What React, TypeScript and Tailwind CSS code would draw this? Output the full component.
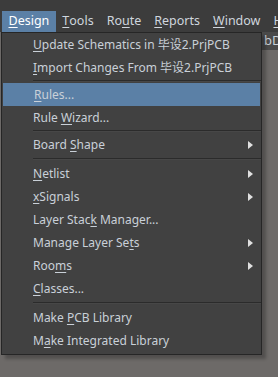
import React from 'react';

type Item = { pre: string; key: string; post: string; sub?: boolean; active?: boolean } | 'sep' | 'sep5';

const items: Item[] = [
  { pre: '', key: 'U', post: 'pdate Schematics in 毕设2.PrjPCB' },
  { pre: '', key: 'I', post: 'mport Changes From 毕设2.PrjPCB' },
  'sep',
  { pre: '', key: 'R', post: 'ules...', active: true },
  { pre: 'Rule ', key: 'W', post: 'izard...' },
  'sep',
  { pre: 'Board ', key: 'S', post: 'hape', sub: true },
  'sep5',
  { pre: '', key: 'N', post: 'etlist', sub: true },
  { pre: '', key: 'x', post: 'Signals', sub: true },
  { pre: 'Layer Stac', key: 'k', post: ' Manager...' },
  { pre: 'Manage Layer Se', key: 't', post: 's', sub: true },
  { pre: 'Roo', key: 'm', post: 's', sub: true },
  { pre: '', key: 'C', post: 'lasses...' },
  'sep5',
  { pre: 'Make ', key: 'P', post: 'CB Library' },
  { pre: 'M', key: 'a', post: 'ke Integrated Library' },
];

const top = [
  ['', 'D', 'esign'],
  ['', 'T', 'ools'],
  ['Ro', 'u', 'te'],
  ['', 'R', 'eports'],
  ['', 'W', 'indow'],
  ['', 'H', 'elp'],
];

export default function App() {
  return (
    <div
      className="relative w-[278px] h-[377px] overflow-hidden bg-[#6d6a68] text-[12px] text-[#c9d0d8]"
      style={{ fontFamily: '"Noto Sans", "Noto Sans CJK SC", sans-serif' }}
    >
      <div className="h-[11px] bg-[#3c3c3c]" />
      <div className="flex h-[21px] items-center bg-[#3c3c3c] pl-[2px] text-[12.5px] text-[#cfd6de]">
        {top.map(([a, k, b], i) => (
          <div
            key={i}
            className={`flex h-full items-center whitespace-nowrap px-[6.5px] ${i === 0 ? 'bg-[#5b80a6] text-white' : ''}`}
          >
            {a}
            <span className="underline underline-offset-2">{k}</span>
            {b}
          </div>
        ))}
      </div>
      <div className="flex">
        <div className="w-[1px] shrink-0" />
        <div className="relative z-10 w-[261px] shrink-0 border border-[#262626] bg-[#414141] pb-[2px] shadow-[4px_4px_3px_rgba(0,0,0,0.25)]">
          {items.map((it, i) =>
            it === 'sep' || it === 'sep5' ? (
              <div key={i} className={`flex items-center pl-[31px] ${it === 'sep5' ? 'h-[6px]' : 'h-[4px]'}`}>
                <div className="h-[2px] w-full border-t border-[#2b2b2b] border-b border-b-[#474747]" />
              </div>
            ) : (
              <div
                key={i}
                className={`flex h-[23px] items-center pl-[31px] pr-[8px] ${it.active ? 'mx-[1px] bg-[#5b80a6] pl-[30px]' : ''}`}
              >
                <span className="flex-1 whitespace-nowrap">
                  {it.pre}
                  <span className="underline underline-offset-2">{it.key}</span>
                  {it.post}
                </span>
                {it.sub && (
                  <svg width="5" height="8" viewBox="0 0 5 8">
                    <path d="M0 0 L5 4 L0 8 Z" fill="#e0e0e0" />
                  </svg>
                )}
              </div>
            )
          )}
        </div>
        <div className="flex h-[18px] flex-1 items-center overflow-hidden whitespace-nowrap bg-[#4a4a4a] pl-[2px] text-[13px] text-[#c9d0d8]">
          bDo
        </div>
      </div>
    </div>
  );
}
